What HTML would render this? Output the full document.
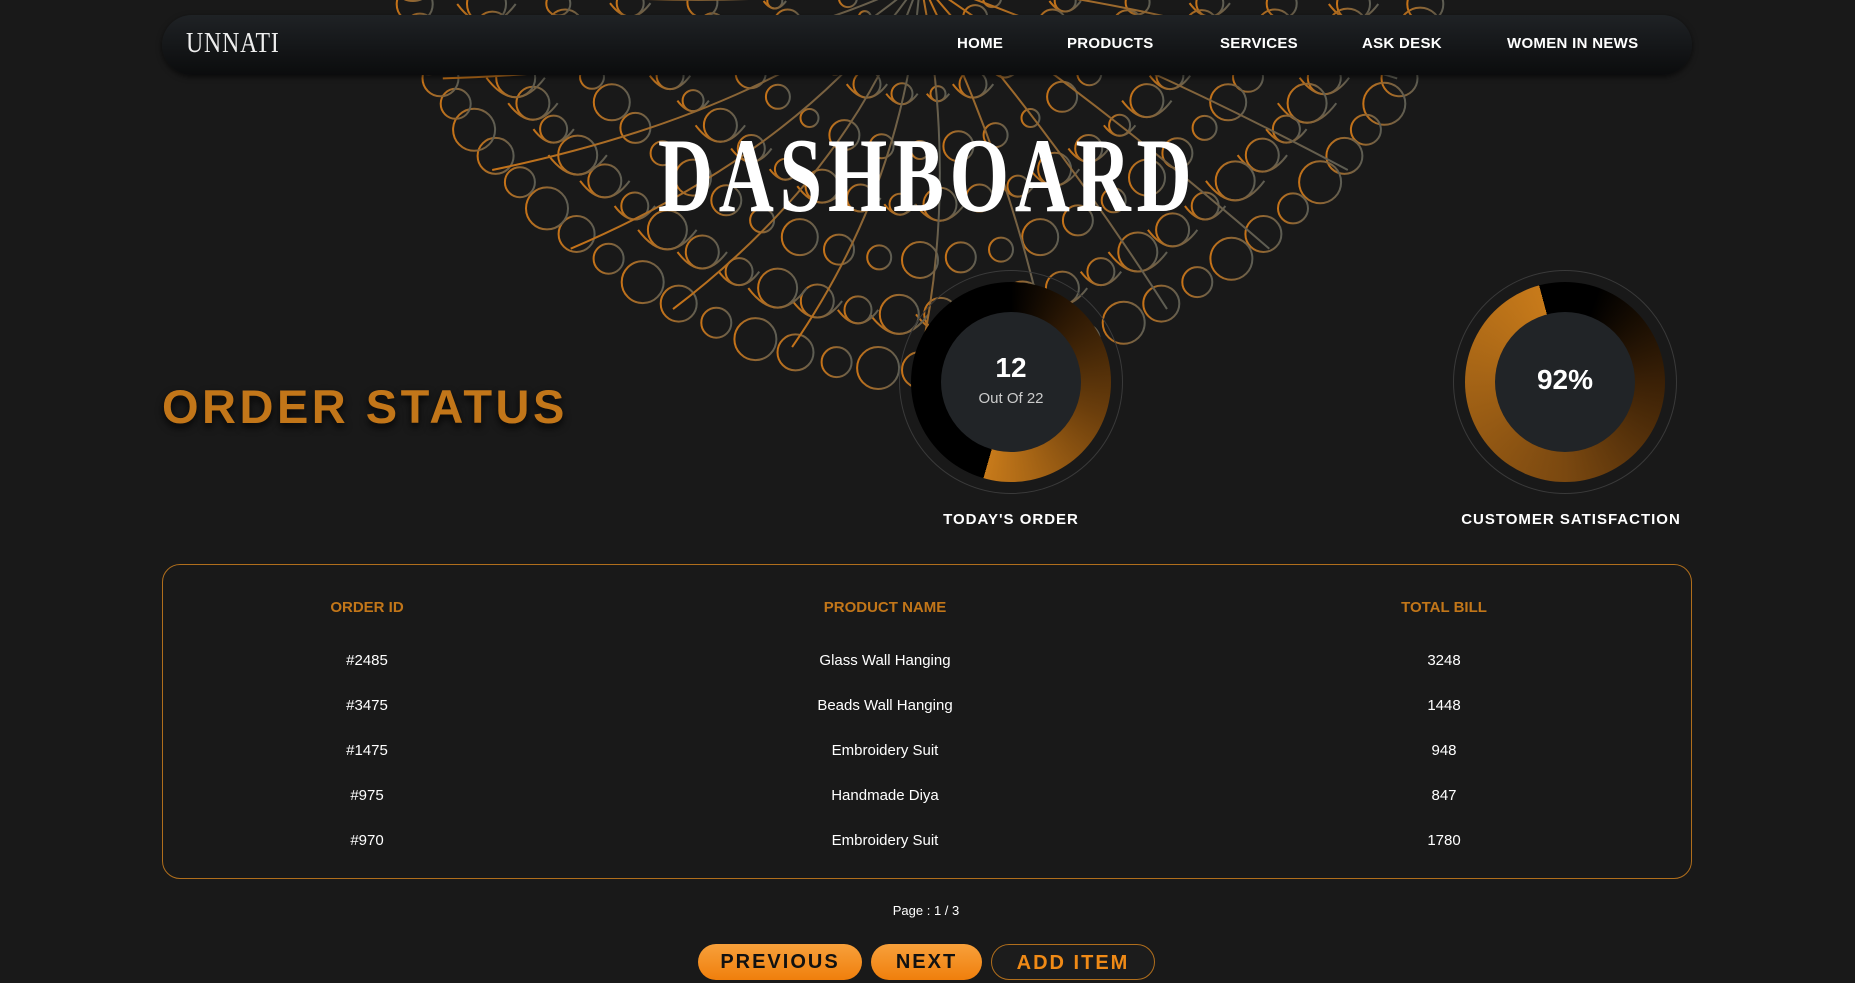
<!DOCTYPE html>
<html><head><meta charset="utf-8"><style>
*{margin:0;padding:0;box-sizing:border-box}
body{width:1855px;height:983px;background:#191919;position:relative;overflow:hidden;font-family:"Liberation Sans",sans-serif;color:#fff}
.abs{position:absolute}
#mandala{position:absolute;left:360px;top:-20px;opacity:.8}
.nav{left:162px;top:15px;width:1530px;height:60px;border-radius:30px;background:linear-gradient(#1f2225,#0b0c0d);box-shadow:0 2px 6px rgba(0,0,0,.6)}
.logo{left:186px;top:28px;font-family:"Liberation Serif",serif;font-size:28px;letter-spacing:1px;color:#eee;transform:scaleX(.85);transform-origin:left}
.nav a{position:absolute;top:20px;font-weight:bold;font-size:15px;letter-spacing:.3px;color:#fff;text-decoration:none}
.title{left:0;width:1855px;top:126px;text-align:center;font-family:"Liberation Serif",serif;font-weight:bold;font-size:106px;line-height:100px;letter-spacing:8px;color:#fff}
.title span{display:inline-block;transform:scaleX(.72)}
.os{left:162px;top:379px;font-size:47px;font-weight:bold;letter-spacing:3.5px;color:#c27619;text-shadow:0 4px 8px rgba(0,0,0,.8)}
.ring{width:224px;height:224px;border-radius:50%;border:1px solid #3a3a3a}
.donut{width:200px;height:200px;border-radius:50%}
.inner{width:140px;height:140px;border-radius:50%;background:#212427;text-align:center}
.lbl{font-weight:bold;font-size:15px;letter-spacing:1px;text-align:center}
.tbl{left:162px;top:564px;width:1530px;height:315px;border:1px solid #b06e1c;border-radius:18px}
.c{position:absolute;width:400px;margin-left:-200px;text-align:center;font-size:15px}
.h{color:#c27619;font-weight:bold;font-size:15px}
.btn{position:absolute;top:944px;height:36px;border-radius:18px;font-weight:bold;font-size:20px;letter-spacing:2px;text-align:center;line-height:36px}
.f{background:linear-gradient(#f7a03b,#f07f0c);color:#111}
</style></head><body>
<svg id="mandala" width="1120" height="430" viewBox="0 0 1120 430"></svg>
<div class="abs nav"></div>
<div class="abs logo">UNNATI</div>
<div class="abs" style="left:0;top:0">
<div class="nav" style="position:absolute;background:none;box-shadow:none">
<a style="left:795px">HOME</a><a style="left:905px">PRODUCTS</a><a style="left:1058px">SERVICES</a><a style="left:1200px">ASK DESK</a><a style="left:1345px">WOMEN IN NEWS</a></div></div>
<div class="abs title"><span>DASHBOARD</span></div>
<div class="abs os">ORDER STATUS</div>

<div class="abs ring" style="left:899px;top:270px"></div>
<div class="abs donut" style="left:911px;top:282px;background:conic-gradient(#000 0deg,#2a1704 40deg,#6b3e0c 110deg,#c77a1a 196deg,#000 196deg)"></div>
<div class="abs inner" style="left:941px;top:312px"><div style="font-size:28px;font-weight:bold;padding-top:40px">12</div><div style="font-size:15px;color:#ccc;margin-top:6px">Out Of 22</div></div>
<div class="abs lbl" style="left:911px;width:200px;top:511px">TODAY'S ORDER</div>

<div class="abs ring" style="left:1453px;top:270px"></div>
<div class="abs donut" style="left:1465px;top:282px;background:conic-gradient(#000 0deg,#000 20deg,#3a2006 90deg,#7a4810 180deg,#c77a1a 345deg,#000 345deg)"></div>
<div class="abs inner" style="left:1495px;top:312px"><div style="font-size:28px;font-weight:bold;padding-top:52px">92%</div></div>
<div class="abs lbl" style="left:1421px;width:300px;top:511px">CUSTOMER SATISFACTION</div>

<div class="abs tbl"></div>
<div class="c h" style="left:367px;top:599px">ORDER ID</div>
<div class="c h" style="left:885px;top:599px">PRODUCT NAME</div>
<div class="c h" style="left:1444px;top:599px">TOTAL BILL</div>
<div class="c" style="left:367px;top:652px">#2485</div><div class="c" style="left:885px;top:652px">Glass Wall Hanging</div><div class="c" style="left:1444px;top:652px">3248</div>
<div class="c" style="left:367px;top:697px">#3475</div><div class="c" style="left:885px;top:697px">Beads Wall Hanging</div><div class="c" style="left:1444px;top:697px">1448</div>
<div class="c" style="left:367px;top:742px">#1475</div><div class="c" style="left:885px;top:742px">Embroidery Suit</div><div class="c" style="left:1444px;top:742px">948</div>
<div class="c" style="left:367px;top:787px">#975</div><div class="c" style="left:885px;top:787px">Handmade Diya</div><div class="c" style="left:1444px;top:787px">847</div>
<div class="c" style="left:367px;top:832px">#970</div><div class="c" style="left:885px;top:832px">Embroidery Suit</div><div class="c" style="left:1444px;top:832px">1780</div>
<div class="c" style="left:926px;top:903px;font-size:13px">Page : 1 / 3</div>
<div class="btn f" style="left:698px;width:164px">PREVIOUS</div>
<div class="btn f" style="left:871px;width:111px">NEXT</div>
<div class="btn" style="left:991px;width:164px;border:1px solid #b06e1c;color:#f08a16;background:#1c1c1c">ADD ITEM</div>
<script>
(function(){var s=document.getElementById('mandala'),h='<defs><linearGradient id="g" x1="0" x2="1"><stop offset="0" stop-color="#f28a18"/><stop offset=".5" stop-color="#b07a38"/><stop offset="1" stop-color="#6e6e62"/></linearGradient></defs><g fill="none" stroke="url(#g)" stroke-width="2">';
var cx=560,cy=0;
for(var ring=0;ring<7;ring++){var R=60+ring*55,n=8+ring*5;for(var i=0;i<=n;i++){var a=Math.PI*i/n;var sy=1-0.25*Math.pow(Math.cos(a),2);var x=cx+R*1.3*Math.cos(a),y=cy+R*Math.sin(a)*sy;var r=6+ring*1.5+(i%3)*3;h+='<circle cx="'+x.toFixed(1)+'" cy="'+y.toFixed(1)+'" r="'+r+'"/>';if(ring%2)h+='<path d="M'+(x-r*1.5).toFixed(1)+' '+y.toFixed(1)+'q'+(r*1.5)+' '+(r*2)+' '+(r*3)+' 0"/>';}}
for(var i=0;i<=12;i++){var a=Math.PI*i/12;h+='<path d="M'+cx+' 0Q'+(cx+200*Math.cos(a-.2)).toFixed(1)+' '+(200*Math.sin(a-.2)).toFixed(1)+' '+(cx+380*1.3*Math.cos(a)).toFixed(1)+' '+(380*Math.sin(a)).toFixed(1)+'"/>';}
s.innerHTML=h+'</g>';})();
</script>
</body></html>
